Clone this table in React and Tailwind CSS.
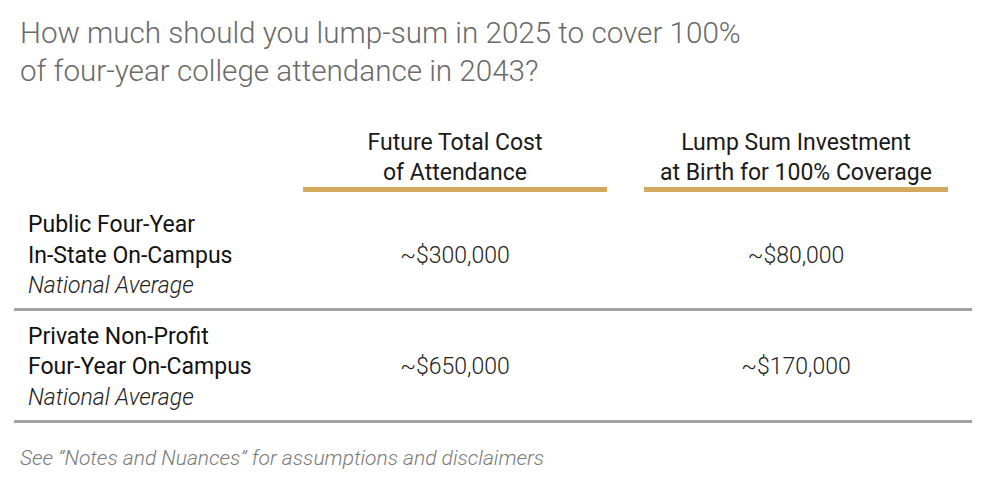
import React from 'react';

const rows = [
  { lines: ['Public Four-Year', 'In-State On-Campus'], cost: '~$300,000', lump: '~$80,000', pad: 'pt-[18px] pb-[6px]' },
  { lines: ['Private Non-Profit', 'Four-Year On-Campus'], cost: '~$650,000', lump: '~$170,000', pad: 'pt-[11px] pb-[7px]' },
];

export default function App() {
  return (
    <div className="w-[1000px] h-[484px] bg-white overflow-hidden" style={{ fontFamily: 'Roboto, "Noto Sans", sans-serif' }}>
      <h1 className="pl-[20px] pt-[14px] text-[29.6px] leading-[38px] font-light text-[#6a6a6a]">
        How much should you lump-sum in 2025 to cover 100%
        <br />
        of four-year college attendance in 2043?
      </h1>

      <div className="ml-[14px] w-[958px] mt-[38px]">
        {/* header */}
        <div className="grid grid-cols-[252px_304px_304px] gap-x-[37px]">
          <div />
          <div>
            <div className="text-center text-[23px] leading-[30px] text-[#1a1a1a] mb-[-1px]">
              Future Total Cost
              <br />
              of Attendance
            </div>
            <div className="h-[5px] bg-[#d2a95d]" />
          </div>
          <div>
            <div className="text-center text-[23px] leading-[30px] text-[#1a1a1a] mb-[-1px]">
              Lump Sum Investment
              <br />
              at Birth for 100% Coverage
            </div>
            <div className="h-[5px] bg-[#d2a95d]" />
          </div>
        </div>

        {rows.map((r) => (
          <div key={r.cost} className={`${r.pad} border-b-[3px] border-[#a3a3a3]`}>
            <div className="grid grid-cols-[252px_304px_304px] gap-x-[37px] items-center">
              <div className="pl-[14px] text-[23px] leading-[30.5px] text-[#111]">
                <div>{r.lines[0]}</div>
                <div>{r.lines[1]}</div>
                <div className="italic font-light text-[#222]">National Average</div>
              </div>
              <div className="text-center text-[23px] leading-[30.5px] font-light text-[#222]">{r.cost}</div>
              <div className="text-center text-[23px] leading-[30.5px] font-light text-[#222]">{r.lump}</div>
            </div>
          </div>
        ))}
      </div>

      <p className="pl-[20px] mt-[21px] text-[21px] leading-[28px] italic font-light text-[#7a7a7a]">
        See “Notes and Nuances” for assumptions and disclaimers
      </p>
    </div>
  );
}
